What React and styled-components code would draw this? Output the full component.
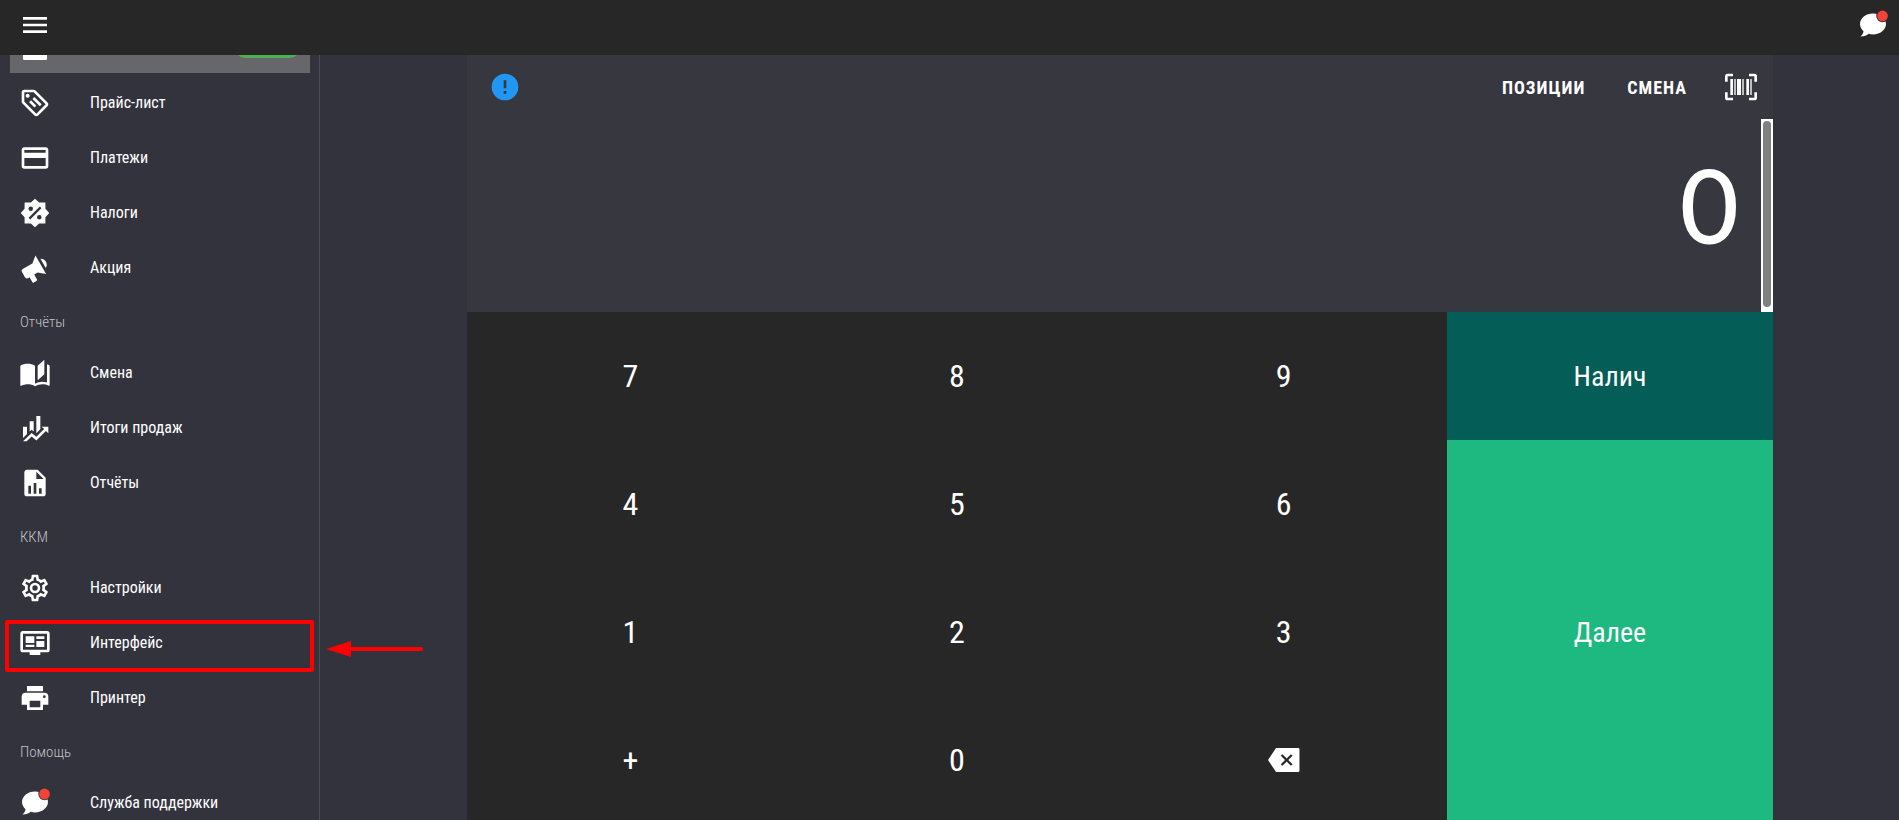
import React from 'react';
import styled, { createGlobalStyle } from 'styled-components';

const GlobalStyle = createGlobalStyle`
  * { box-sizing: border-box; }
  body {
    margin: 0;
    background: #33333d;
    color: #fff;
    font-family: 'Roboto Condensed', Roboto, 'Liberation Sans', sans-serif;
    font-size: 16px;
  }
  button {
    margin: 0;
    padding: 0;
    border: 0;
    background: none;
    color: inherit;
    font: inherit;
    cursor: pointer;
  }
`;

const Shell = styled.div`
  position: relative;
  display: flex;
  flex-direction: column;
  height: 100vh;
  overflow: hidden;
`;

const TopBar = styled.header`
  display: flex;
  flex: none;
  align-items: center;
  justify-content: space-between;
  height: 55px;
  padding: 0 10px 5px 19px;
  background: #272727;
`;

const IconButton = styled.button`
  display: flex;
`;

const InfoButton = styled(IconButton)`
  color: #2196f3;
`;

const Glyph = styled.svg`
  display: block;
  flex: none;
  width: 32px;
  height: 32px;
  fill: currentColor;
`;

const Body = styled.div`
  display: flex;
  flex: 1;
  min-height: 0;
`;

const Sidebar = styled.nav`
  flex: none;
  width: 320px;
  overflow: hidden;
  border-right: 1px solid #4d4d56;
`;

/* The list is scrolled a little, so its first entry is partly under the bar. */
const MenuList = styled.ul`
  margin: -33px 0 0;
  padding: 0 9px 0 10px;
  list-style: none;
`;

const MenuItem = styled.a`
  display: flex;
  align-items: center;
  gap: 39px;
  height: 51px;
  margin-bottom: 4px;
  padding: 0 10px 0 9px;
  background: ${({ $active }) => ($active ? '#66666b' : 'transparent')};
  color: #fff;
  text-decoration: none;
`;

const Badge = styled.span`
  width: 65px;
  height: 20px;
  margin-left: auto;
  border-radius: 10px;
  background: #4caf50;
`;

const MenuHeading = styled.li`
  display: flex;
  align-items: center;
  height: 50px;
  padding: 0 10px;
  color: #c2c2c5;
  font-size: 15px;
  font-weight: 300;
`;

const Main = styled.main`
  flex: 1;
  display: grid;
  grid-template-columns: 147fr 1306fr 126fr;
  align-items: start;
`;

const Register = styled.section`
  grid-column: 2;
`;

const Display = styled.div`
  background: #37373f;
`;

const DisplayBar = styled.div`
  display: flex;
  align-items: center;
  gap: 38px;
  height: 64px;
  padding: 0 16px 0 22px;
`;

const DisplayLinks = styled.div`
  display: flex;
  gap: 42px;
  margin-left: auto;
`;

const TextButton = styled.button`
  font-size: 18px;
  font-weight: 700;
  letter-spacing: 1px;
`;

const AmountArea = styled.div`
  display: flex;
  height: 193px;
`;

const Amount = styled.output`
  flex: 1;
  padding: 22px 22px 0;
  font-family: Lato, 'Open Sans', sans-serif;
  font-size: 102px;
  font-weight: 500;
  line-height: 128px;
  text-align: right;
`;

const ScrollTrack = styled.div`
  display: flex;
  width: 12px;
  padding: 2px 2px 5px;
  background: #fff;
`;

const ScrollThumb = styled.div`
  flex: 1;
  border-radius: 4px;
  background: #808080;
`;

const Pad = styled.div`
  display: grid;
  grid-template-columns: 980fr 326fr;
`;

const Digits = styled.div`
  display: grid;
  grid-template-columns: repeat(3, 1fr);
  grid-auto-rows: 128px;
  background: #272727;
`;

const DigitKey = styled.button`
  display: flex;
  align-items: center;
  justify-content: center;
  font-size: 32px;
`;

const PayColumn = styled.div`
  display: grid;
  grid-template-rows: 128px 1fr;
`;

const PayButton = styled.button`
  background: ${({ $tone }) => ($tone === 'cash' ? '#045d56' : '#1eb980')};
  font-size: 28px;
`;

const Highlight = styled.div`
  position: absolute;
  top: 620px;
  left: 5px;
  width: 309px;
  height: 52px;
  border: 4px solid #f00;
  border-radius: 2px;
  pointer-events: none;
`;

const Pointer = styled.svg`
  position: absolute;
  top: 641px;
  left: 326px;
  width: 98px;
  height: 16px;
  pointer-events: none;
`;

const PATHS = {
  menu: 'M3,6H21V8H3V6M3,11H21V13H3V11M3,16H21V18H3V16Z',
  shop: 'M4,2H20A1,1 0 0,1 21,3V20A1,1 0 0,1 20,21H4A1,1 0 0,1 3,20V3A1,1 0 0,1 4,2Z',
  tag: 'M21.41 11.58L12.41 2.58A2 2 0 0 0 11 2H4A2 2 0 0 0 2 4V11A2 2 0 0 0 2.59 12.42L11.59 21.42A2 2 0 0 0 13 22A2 2 0 0 0 14.41 21.41L21.41 14.41A2 2 0 0 0 22 13A2 2 0 0 0 21.41 11.58M13 20L4 11V4H11L20 13M6.5 5A1.5 1.5 0 1 1 5 6.5A1.5 1.5 0 0 1 6.5 5M10.09 8.91L11.5 7.5L17 13L15.59 14.41L10.09 8.91M7.59 11.41L9 10L13 14L11.59 15.41L7.59 11.41Z',
  card: 'M20,8H4V6H20M20,18H4V12H20M20,4H4C2.89,4 2,4.89 2,6V18A2,2 0 0,0 4,20H20A2,2 0 0,0 22,18V6C22,4.89 21.1,4 20,4Z',
  percent: 'M12,1.3L15.1,4.2H19.8V8.9L22.7,12L19.8,15.1V19.8H15.1L12,22.7L8.9,19.8H4.2V15.1L1.3,12L4.2,8.9V4.2H8.9ZM8.8,7.1A1.7,1.7 0 1,0 8.8,10.5A1.7,1.7 0 1,0 8.8,7.1ZM15.2,13.5A1.7,1.7 0 1,0 15.2,16.9A1.7,1.7 0 1,0 15.2,13.5ZM15.6,7.2L7.2,15.6L8.4,16.8L16.8,8.4Z',
  bullhorn: 'M12 8H4A2 2 0 0 0 2 10V14A2 2 0 0 0 4 16H5V20A1 1 0 0 0 6 21H8A1 1 0 0 0 9 20V16H12L17 20V4L12 8M21.5 12C21.5 13.71 20.54 15.26 19 16V8C20.53 8.75 21.5 10.3 21.5 12Z',
  book: 'M19 2L14 6.5V17.5L19 13V2M6.5 5C4.55 5 2.45 5.4 1 6.5V21.16C1 21.41 1.25 21.66 1.5 21.66C1.6 21.66 1.65 21.59 1.75 21.59C3.1 20.94 5.05 20.5 6.5 20.5C8.45 20.5 10.55 20.9 12 22C13.35 21.15 15.8 20.5 17.5 20.5C19.15 20.5 20.85 20.81 22.25 21.56C22.35 21.61 22.4 21.59 22.5 21.59C22.75 21.59 23 21.34 23 21.09V6.5C22.4 6.05 21.75 5.75 21 5.5V19C19.9 18.65 18.7 18.5 17.5 18.5C15.8 18.5 13.35 19.15 12 20V6.5C10.55 5.4 8.45 5 6.5 5Z',
  finance: 'M6,16.5L3,19.44V11H6M11,14.66L9.43,13.32L8,14.64V7H11M16,13L13,16V3H16M18.81,12.81L17,11H22V16L20.21,14.21L13,21.36L9.53,18.34L5.75,22H3L9.47,15.66L13,18.64',
  report: 'M13,9H18.5L13,3.5V9M6,2H14L20,8V20A2,2 0 0,1 18,22H6A2,2 0 0,1 4,20V4C4,2.89 4.89,2 6,2M7,20H9V14H7V20M11,20H13V12H11V20M15,20H17V16H15V20Z',
  cog: 'M12,8A4,4 0 0,1 16,12A4,4 0 0,1 12,16A4,4 0 0,1 8,12A4,4 0 0,1 12,8M12,10A2,2 0 0,0 10,12A2,2 0 0,0 12,14A2,2 0 0,0 14,12A2,2 0 0,0 12,10M10,22C9.75,22 9.54,21.82 9.5,21.58L9.13,18.93C8.5,18.68 7.96,18.34 7.44,17.94L4.95,18.95C4.73,19.03 4.46,18.95 4.34,18.73L2.34,15.27C2.21,15.05 2.27,14.78 2.46,14.63L4.57,12.97L4.5,12L4.57,11L2.46,9.37C2.27,9.22 2.21,8.95 2.34,8.73L4.34,5.27C4.46,5.05 4.73,4.96 4.95,5.05L7.44,6.05C7.96,5.66 8.5,5.32 9.13,5.07L9.5,2.42C9.54,2.18 9.75,2 10,2H14C14.25,2 14.46,2.18 14.5,2.42L14.87,5.07C15.5,5.32 16.04,5.66 16.56,6.05L19.05,5.05C19.27,4.96 19.54,5.05 19.66,5.27L21.66,8.73C21.79,8.95 21.73,9.22 21.54,9.37L19.43,11L19.5,12L19.43,13L21.54,14.63C21.73,14.78 21.79,15.05 21.66,15.27L19.66,18.73C19.54,18.95 19.27,19.04 19.05,18.95L16.56,17.95C16.04,18.34 15.5,18.68 14.87,18.93L14.5,21.58C14.46,21.82 14.25,22 14,22H10M11.25,4L10.88,6.61C9.68,6.86 8.62,7.5 7.85,8.39L5.44,7.35L4.69,8.65L6.8,10.2C6.4,11.37 6.4,12.64 6.8,13.8L4.68,15.36L5.43,16.66L7.86,15.62C8.63,16.5 9.68,17.14 10.87,17.38L11.24,20H12.76L13.13,17.39C14.32,17.14 15.37,16.5 16.14,15.62L18.57,16.66L19.32,15.36L17.2,13.81C17.6,12.64 17.6,11.37 17.2,10.2L19.31,8.65L18.56,7.35L16.15,8.39C15.38,7.5 14.32,6.86 13.12,6.62L12.75,4H11.25Z',
  screen: 'M21,3H3A2,2 0 0,0 1,5V17A2,2 0 0,0 3,19H8V21H16V19H21A2,2 0 0,0 23,17V5A2,2 0 0,0 21,3M21,17H3V5H21ZM5,7H11.5V12H5ZM13,7H19V9H13ZM13,10.5H19V15H13ZM5,13.3H11.5V15H5Z',
  printer: 'M18,3H6V7H18M19,12A1,1 0 0,1 18,11A1,1 0 0,1 19,10A1,1 0 0,1 20,11A1,1 0 0,1 19,12M16,19H8V14H16M19,8H5A3,3 0 0,0 2,11V17H6V21H18V17H22V11A3,3 0 0,0 19,8Z',
  alert: 'M13,13H11V7H13M13,17H11V15H13M12,2A10,10 0 0,0 2,12A10,10 0 0,0 12,22A10,10 0 0,0 22,12A10,10 0 0,0 12,2Z',
  barcode: 'M4,6H6V18H4V6M7,6H8V18H7V6M9,6H12V18H9V6M13,6H14V18H13V6M16,6H18V18H16V6M19,6H20V18H19V6M2,4V8H0V4A2,2 0 0,1 2,2H6V4H2M22,2A2,2 0 0,1 24,4V8H22V4H18V2H22M2,16V20H6V22H2A2,2 0 0,1 0,20V16H2M22,20V16H24V20A2,2 0 0,1 22,22H18V20H22Z',
  backspace: 'M22.6,3H6.6C6,3 5.7,3.3 5.41,3.88L0,12L5.41,20.11C5.7,20.7 6,21 6.6,21H22.6A1,1 0 0,0 23.6,20V4A1,1 0 0,0 22.6,3M18.4,15.2L17.2,16.4L14,13.2L10.8,16.4L9.6,15.2L12.8,12L9.6,8.8L10.8,7.6L14,10.8L17.2,7.6L18.4,8.8L15.2,12Z',
};

function Icon({ name }) {
  return (
    <Glyph viewBox="0 0 24 24" aria-hidden="true">
      <path
        d={PATHS[name]}
        fillRule="evenodd"
        transform={name === 'bullhorn' ? 'rotate(-30 12 12)' : undefined}
      />
    </Glyph>
  );
}

function ChatIcon({ backdrop }) {
  return (
    <Glyph viewBox="0 0 32 32" aria-hidden="true">
      <path d="M16 4.5C8.8 4.5 3 9.2 3 15C3 18 4.5 20.5 6.5 22.3C6.3 24.5 5 26.4 3.4 27.6C6.8 27.7 9.6 26.6 11.6 24.8C13 25.2 14.5 25.4 16 25.4C23.2 25.4 29 20.8 29 15C29 9.2 23.2 4.5 16 4.5Z" />
      <circle cx="25.5" cy="7" r="6.2" fill={backdrop} />
      <circle cx="25.5" cy="7" r="5.4" fill="#f44336" />
    </Glyph>
  );
}

const MENU = [
  { icon: 'shop', active: true },
  { icon: 'tag', label: 'Прайс-лист' },
  { icon: 'card', label: 'Платежи' },
  { icon: 'percent', label: 'Налоги' },
  { icon: 'bullhorn', label: 'Акция' },
  { heading: 'Отчёты' },
  { icon: 'book', label: 'Смена' },
  { icon: 'finance', label: 'Итоги продаж' },
  { icon: 'report', label: 'Отчёты' },
  { heading: 'ККМ' },
  { icon: 'cog', label: 'Настройки' },
  { icon: 'screen', label: 'Интерфейс' },
  { icon: 'printer', label: 'Принтер' },
  { heading: 'Помощь' },
  { icon: 'chat', label: 'Служба поддержки' },
];

const KEYS = ['7', '8', '9', '4', '5', '6', '1', '2', '3', '+', '0'];

export default function App() {
  return (
    <>
      <GlobalStyle />
      <Shell>
        <TopBar>
          <IconButton type="button">
            <Icon name="menu" />
          </IconButton>
          <IconButton type="button">
            <ChatIcon backdrop="#272727" />
          </IconButton>
        </TopBar>
        <Body>
          <Sidebar>
            <MenuList>
              {MENU.map((entry, i) =>
                entry.heading ? (
                  <MenuHeading key={i}>{entry.heading}</MenuHeading>
                ) : (
                  <li key={i}>
                    <MenuItem href="#" $active={entry.active}>
                      {entry.icon === 'chat' ? (
                        <ChatIcon backdrop="#33333d" />
                      ) : (
                        <Icon name={entry.icon} />
                      )}
                      {entry.label}
                      {entry.active && <Badge />}
                    </MenuItem>
                  </li>
                )
              )}
            </MenuList>
          </Sidebar>
          <Main>
            <Register>
              <Display>
                <DisplayBar>
                  <InfoButton type="button">
                    <Icon name="alert" />
                  </InfoButton>
                  <DisplayLinks>
                    <TextButton type="button">ПОЗИЦИИ</TextButton>
                    <TextButton type="button">СМЕНА</TextButton>
                  </DisplayLinks>
                  <IconButton type="button">
                    <Icon name="barcode" />
                  </IconButton>
                </DisplayBar>
                <AmountArea>
                  <Amount>0</Amount>
                  <ScrollTrack>
                    <ScrollThumb />
                  </ScrollTrack>
                </AmountArea>
              </Display>
              <Pad>
                <Digits>
                  {KEYS.map((key) => (
                    <DigitKey key={key} type="button">
                      {key}
                    </DigitKey>
                  ))}
                  <DigitKey type="button">
                    <Icon name="backspace" />
                  </DigitKey>
                </Digits>
                <PayColumn>
                  <PayButton type="button" $tone="cash">Налич</PayButton>
                  <PayButton type="button" $tone="next">Далее</PayButton>
                </PayColumn>
              </Pad>
            </Register>
          </Main>
        </Body>
        <Highlight />
        <Pointer viewBox="0 0 98 16" aria-hidden="true">
          <path d="M0 8L25 0V16Z" fill="#f00" />
          <path d="M24 8H95" stroke="#f00" strokeWidth="4" strokeLinecap="round" />
        </Pointer>
      </Shell>
    </>
  );
}
